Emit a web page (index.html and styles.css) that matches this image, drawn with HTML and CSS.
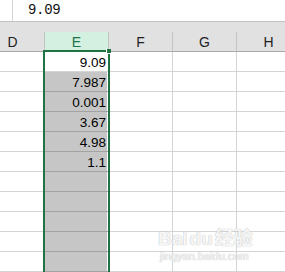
FILE: index.html
```html
<!DOCTYPE html>
<html lang="en">
  <head>
    <meta charset="UTF-8" />
    <meta name="viewport" content="width=device-width, initial-scale=1.0" />
    <title>Sheet</title>
    <link rel="stylesheet" href="styles.css">
  </head>
  <body>
    <div class="sheet">
      <div class="formula-bar">
        <div class="name-box"></div>
        <div class="formula">9.09</div>
      </div>
      <div class="ribbon-gap"></div>

      <div class="grid">
        <div class="col-head">D</div>
        <div class="col-head active">E</div>
        <div class="col-head">F</div>
        <div class="col-head">G</div>
        <div class="col-head">H</div>

        <div class="cell"></div><div class="cell num current">9.09</div><div class="cell"></div><div class="cell"></div><div class="cell"></div>
        <div class="cell"></div><div class="cell num sel">7.987</div><div class="cell"></div><div class="cell"></div><div class="cell"></div>
        <div class="cell"></div><div class="cell num sel">0.001</div><div class="cell"></div><div class="cell"></div><div class="cell"></div>
        <div class="cell"></div><div class="cell num sel">3.67</div><div class="cell"></div><div class="cell"></div><div class="cell"></div>
        <div class="cell"></div><div class="cell num sel">4.98</div><div class="cell"></div><div class="cell"></div><div class="cell"></div>
        <div class="cell"></div><div class="cell num sel">1.1</div><div class="cell"></div><div class="cell"></div><div class="cell"></div>
        <div class="cell"></div><div class="cell sel"></div><div class="cell"></div><div class="cell"></div><div class="cell"></div>
        <div class="cell"></div><div class="cell sel"></div><div class="cell"></div><div class="cell"></div><div class="cell"></div>
        <div class="cell"></div><div class="cell sel"></div><div class="cell"></div><div class="cell"></div><div class="cell"></div>
        <div class="cell"></div><div class="cell sel"></div><div class="cell"></div><div class="cell"></div><div class="cell"></div>
        <div class="cell"></div><div class="cell sel"></div><div class="cell"></div><div class="cell"></div><div class="cell"></div>

        <div class="selection"><span class="handle"></span></div>
      </div>

      <div class="watermark">
        <div class="wm-logo">Bai<span class="wm-du">du</span>经验</div>
        <div class="wm-url">jingyan.baidu.com</div>
      </div>
    </div>
  </body>
</html>
```

FILE: styles.css
```css
* {
  margin: 0;
  padding: 0;
  box-sizing: border-box;
}

body {
  width: 285px;
  height: 272px;
  overflow: hidden;
  background: #ffffff;
  font-family: "Liberation Sans", Arial, sans-serif;
}

.sheet {
  position: relative;
  height: 272px;
  overflow: hidden;
}

/* formula bar */
.formula-bar {
  display: flex;
  height: 21px;
  background: #ffffff;
}

.name-box {
  width: 13px;
  border-right: 1px solid #d4d4d4;
}

.formula {
  padding-left: 15px;
  padding-top: 2px;
  font-family: "Liberation Mono", "Courier New", monospace;
  font-size: 14px;
  line-height: 17px;
  letter-spacing: -0.3px;
  color: #111111;
}

.ribbon-gap {
  height: 11px;
  background: #e1e1e1;
  border-top: 1px solid #c2c2c2;
}

/* grid */
.grid {
  position: relative;
  display: grid;
  grid-template-columns: repeat(5, 64px);
  grid-auto-rows: 20px;
  margin-left: -19px;
}

.col-head {
  height: 20px;
  background: #e1e1e1;
  border-right: 1px solid #c4c4c4;
  border-bottom: 1px solid #a9a9a9;
  text-align: center;
  font-size: 14px;
  line-height: 19px;
  padding-top: 1px;
  color: #1f1f1f;
}

.col-head.active {
  background: #d3f0e0;
  color: #217346;
}

.cell {
  border-right: 1px solid #d4d4d4;
  border-bottom: 1px solid #d4d4d4;
}

.num {
  text-align: right;
  padding-right: 2px;
  padding-top: 1px;
  font-size: 13.5px;
  line-height: 19px;
  color: #000000;
}

.sel {
  background: #c6c6c6;
  border-bottom-color: #a3a3a3;
  box-shadow: inset -1px 0 0 #ffffff;
}

.current {
  background: #ffffff;
}

.selection {
  position: absolute;
  left: 62px;
  top: 18px;
  width: 67px;
  height: 240px;
  border: 2px solid #217346;
  pointer-events: none;
}

.handle {
  position: absolute;
  right: -3px;
  top: -3px;
  width: 5px;
  height: 5px;
  background: #217346;
  border: 1px solid #ffffff;
  border-top: none;
  border-right: none;
}

/* watermark */
.watermark {
  position: absolute;
  left: 158px;
  top: 228px;
  color: rgba(255, 255, 255, 0.85);
  text-shadow: 0 0 1px #c4c4c4, 0 0 1px #c4c4c4;
  pointer-events: none;
}

.wm-logo {
  font-size: 19px;
  font-weight: bold;
  line-height: 22px;
  font-family: "Liberation Sans", "Noto Sans CJK SC", sans-serif;
}

.wm-du {
  margin: 0 2px;
}

.wm-url {
  font-size: 11px;
  line-height: 12px;
  margin-left: 2px;
}
```
